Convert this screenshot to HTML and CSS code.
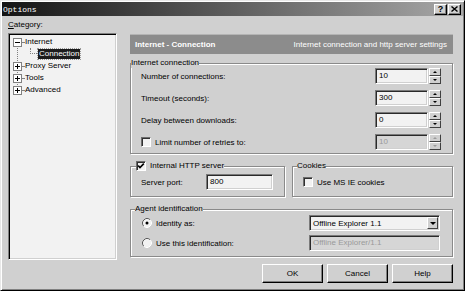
FILE: index.html
```html
<!DOCTYPE html>
<html lang="en">
<head>
    <meta charset="UTF-8">
    <meta name="viewport" content="width=device-width, initial-scale=1.0">
    <title>Options</title>
    <link rel="stylesheet" href="styles.css">
</head>
<body>
    <div class="window">
        <div class="titlebar">
            <span class="title">Options</span>
            <div class="title-buttons">
                <span class="tbtn">?</span>
                <span class="tbtn">
                    <svg width="7" height="6" viewBox="0 0 7 6"><path d="M0.5 0.5l6 5M6.5 0.5l-6 5" stroke="#000" stroke-width="1.4"/></svg>
                </span>
            </div>
        </div>

        <div class="client">
            <div class="main">
                <div class="left">
                    <div class="cat-label"><u>C</u>ategory:</div>
                    <div class="tree">
                        <div class="tree-list">
                            <div class="node">
                                <svg class="twist" width="9" height="9" viewBox="0 0 9 9"><rect x="0.5" y="0.5" width="8" height="8" fill="#fff" stroke="#808080"/><path d="M2 4.5h5" stroke="#000"/></svg>
                                <span class="dash"></span>
                                <span class="node-text">Internet</span>
                            </div>
                            <div class="node">
                                <span class="elbow"></span>
                                <span class="node-text selected">Connection</span>
                            </div>
                            <div class="node">
                                <svg class="twist" width="9" height="9" viewBox="0 0 9 9"><rect x="0.5" y="0.5" width="8" height="8" fill="#fff" stroke="#808080"/><path d="M2 4.5h5M4.5 2v5" stroke="#000"/></svg>
                                <span class="dash"></span>
                                <span class="node-text">Proxy Server</span>
                            </div>
                            <div class="node">
                                <svg class="twist" width="9" height="9" viewBox="0 0 9 9"><rect x="0.5" y="0.5" width="8" height="8" fill="#fff" stroke="#808080"/><path d="M2 4.5h5M4.5 2v5" stroke="#000"/></svg>
                                <span class="dash"></span>
                                <span class="node-text">Tools</span>
                            </div>
                            <div class="node">
                                <svg class="twist" width="9" height="9" viewBox="0 0 9 9"><rect x="0.5" y="0.5" width="8" height="8" fill="#fff" stroke="#808080"/><path d="M2 4.5h5M4.5 2v5" stroke="#000"/></svg>
                                <span class="dash"></span>
                                <span class="node-text">Advanced</span>
                            </div>
                        </div>
                    </div>
                </div>

                <div class="right">
                    <div class="page-header">
                        <span class="page-title">Internet - Connection</span>
                        <span class="page-desc">Internet connection and http server settings</span>
                    </div>

                    <fieldset class="group conn">
                        <legend>Internet connection</legend>
                        <div class="rows">
                            <div class="field-row">
                                <span>Number of connections:</span>
                                <div class="spin">
                                    <span class="edit">10</span>
                                    <span class="spin-btns"><span class="spin-btn up"></span><span class="spin-btn down"></span></span>
                                </div>
                            </div>
                            <div class="field-row">
                                <span>Timeout (seconds):</span>
                                <div class="spin">
                                    <span class="edit">300</span>
                                    <span class="spin-btns"><span class="spin-btn up"></span><span class="spin-btn down"></span></span>
                                </div>
                            </div>
                            <div class="field-row">
                                <span>Delay between downloads:</span>
                                <div class="spin">
                                    <span class="edit">0</span>
                                    <span class="spin-btns"><span class="spin-btn up"></span><span class="spin-btn down"></span></span>
                                </div>
                            </div>
                            <div class="field-row">
                                <span class="check-label"><span class="check"></span>Limit number of retries to:</span>
                                <div class="spin disabled">
                                    <span class="edit">10</span>
                                    <span class="spin-btns"><span class="spin-btn up"></span><span class="spin-btn down"></span></span>
                                </div>
                            </div>
                        </div>
                    </fieldset>

                    <div class="group-row">
                        <fieldset class="group http">
                            <legend class="check-legend">
                                <span class="check"><svg width="8" height="8" viewBox="0 0 8 8"><path d="M1.2 3.6l1.8 1.9 3.8-3.9" stroke="#000" stroke-width="1.6" fill="none"/></svg></span>Internal HTTP server
                            </legend>
                            <div class="field-row">
                                <span>Server port:</span>
                                <span class="edit port">800</span>
                            </div>
                        </fieldset>
                        <fieldset class="group cookies">
                            <legend>Cookies</legend>
                            <div class="field-row">
                                <span class="check-label"><span class="check"></span>Use MS IE cookies</span>
                            </div>
                        </fieldset>
                    </div>

                    <fieldset class="group agent">
                        <legend>Agent identification</legend>
                        <div class="rows tight">
                            <div class="field-row">
                                <span class="radio-label">
                                    <svg width="10" height="10" viewBox="0 0 10 10"><circle cx="5" cy="5" r="4.3" fill="#f2f2f2"/><path d="M1.82 8.18A4.5 4.5 0 0 1 8.18 1.82" stroke="#5a5a5a" fill="none"/><path d="M8.18 1.82A4.5 4.5 0 0 1 1.82 8.18" stroke="#fff" fill="none"/><circle cx="5" cy="5" r="1.5" fill="#000"/></svg>
                                    Identity as:
                                </span>
                                <div class="combo">
                                    <span class="combo-text">Offline Explorer 1.1</span>
                                    <span class="combo-btn"></span>
                                </div>
                            </div>
                            <div class="field-row">
                                <span class="radio-label">
                                    <svg width="10" height="10" viewBox="0 0 10 10"><circle cx="5" cy="5" r="4.3" fill="#f2f2f2"/><path d="M1.82 8.18A4.5 4.5 0 0 1 8.18 1.82" stroke="#5a5a5a" fill="none"/><path d="M8.18 1.82A4.5 4.5 0 0 1 1.82 8.18" stroke="#fff" fill="none"/></svg>
                                    Use this identification:
                                </span>
                                <span class="edit wide disabled">Offline Explorer/1.1</span>
                            </div>
                        </div>
                    </fieldset>
                </div>
            </div>

            <div class="buttons">
                <span class="btn">OK</span>
                <span class="btn">Cancel</span>
                <span class="btn">Help</span>
            </div>
        </div>
    </div>
</body>
</html>
```

FILE: styles.css
```css
* {
    box-sizing: border-box;
}

body {
    margin: 0;
    background: #d0d0d0;
    font-family: "Liberation Sans", Arial, sans-serif;
    font-size: 8px;
    color: #000;
}

.window {
    width: 465px;
    height: 291px;
    background: #d0d0d0;
    border: 1px solid;
    border-color: #e8e8e8 #000 #000 #e8e8e8;
    box-shadow: inset 1px 1px 0 #fff, inset -1px -1px 0 #808080;
    padding: 1px;
}

.titlebar {
    height: 14px;
    display: flex;
    align-items: center;
    justify-content: space-between;
    padding: 0 2px 0 1px;
    background: linear-gradient(to right, #141414, #a8a8a8);
}

.title {
    font-family: "Liberation Mono", monospace;
    font-size: 8px;
    color: #fff;
}

.title-buttons {
    display: flex;
    gap: 1px;
}

.tbtn {
    width: 13px;
    height: 11px;
    display: flex;
    align-items: center;
    justify-content: center;
    background: #d0d0d0;
    border: 1px solid;
    border-color: #fff #000 #000 #fff;
    box-shadow: inset -1px -1px 0 #808080;
    font-weight: bold;
    font-size: 9px;
    line-height: 1;
}

.tbtn svg {
    display: block;
}

.client {
    padding: 4px 10px 0 6px;
}

.main {
    display: flex;
    justify-content: space-between;
}

/* left: category tree */
.left {
    width: 109px;
}

.cat-label {
    height: 10px;
    line-height: 10px;
    margin-bottom: 3px;
}

.tree {
    height: 227px;
    background: #f2f2f2;
    border: 1px solid;
    border-color: #808080 #fff #fff #808080;
    box-shadow: inset 1px 1px 0 #000, inset -1px -1px 0 #d0d0d0;
    padding: 1px;
    overflow: hidden;
}

.tree-list {
    padding-top: 1px;
    background-image: repeating-linear-gradient(to bottom, #808080 0 1px, transparent 1px 2px);
    background-size: 1px 40px;
    background-position: 7px 11px;
    background-repeat: no-repeat;
}

.node {
    display: flex;
    align-items: center;
    height: 12px;
    white-space: nowrap;
}

.twist {
    display: block;
    margin-left: 3px;
}

.dash {
    width: 2px;
    border-top: 1px dotted #808080;
}

.node-text {
    padding: 0 1px;
    line-height: 10px;
}

.elbow {
    align-self: flex-start;
    width: 7px;
    height: 6px;
    margin-left: 20px;
    margin-right: 1px;
    border-left: 1px dotted #808080;
    border-bottom: 1px dotted #808080;
}

.selected {
    background: #1c1c1c;
    color: #fff;
    outline: 1px dotted #9a9a9a;
}

/* right: settings page */
.right {
    width: 323px;
    padding-top: 14px;
}

.page-header {
    height: 20px;
    display: flex;
    align-items: center;
    justify-content: space-between;
    padding: 0 6px 0 5px;
    background: #8c8c8c;
    border-top: 1px solid #b4b4b4;
    color: #fff;
}

.page-title {
    font-weight: bold;
}

.group {
    margin: 0;
    min-width: 0;
    padding: 0 11px 3px 10px;
    border: 1px solid #8a8a8a;
    box-shadow: inset 1px 1px 0 #fff, 1px 1px 0 #fff;
}

.group legend {
    padding: 0;
    margin-left: -10px;
    line-height: 10px;
    background: #d0d0d0;
}

.conn {
    margin-top: 4px;
}

.rows {
    display: flex;
    flex-direction: column;
    gap: 6px;
}

.rows.tight {
    gap: 4px;
}

.field-row {
    height: 16px;
    display: flex;
    align-items: center;
    justify-content: space-between;
    white-space: nowrap;
}

.spin {
    display: flex;
}

.edit {
    width: 53px;
    height: 16px;
    padding: 0 3px;
    line-height: 14px;
    background: #f2f2f2;
    border: 1px solid;
    border-color: #7a7a7a #fff #fff #7a7a7a;
    box-shadow: inset 1px 1px 0 #2a2a2a, inset -1px -1px 0 #d0d0d0;
    overflow: hidden;
}

.edit.port {
    width: 67px;
}

.edit.wide {
    width: 131px;
}

.edit.disabled,
.spin.disabled .edit {
    background: #d6d6d6;
    color: #9a9a9a;
}

.spin-btns {
    width: 12px;
    margin-left: 1px;
    display: flex;
    flex-direction: column;
}

.spin-btn {
    height: 8px;
    display: flex;
    align-items: center;
    justify-content: center;
    background: #d0d0d0;
    border: 1px solid;
    border-color: #fff #404040 #404040 #fff;
}

.spin-btn.up::after {
    content: "";
    border-left: 2px solid transparent;
    border-right: 2px solid transparent;
    border-bottom: 2px solid #000;
}

.spin-btn.down::after {
    content: "";
    border-left: 2px solid transparent;
    border-right: 2px solid transparent;
    border-top: 2px solid #000;
}

.spin.disabled .spin-btn.up::after {
    border-bottom-color: #9a9a9a;
}

.spin.disabled .spin-btn.down::after {
    border-top-color: #9a9a9a;
}

.check-label {
    display: flex;
    align-items: center;
    gap: 4px;
}

.check {
    width: 10px;
    height: 10px;
    display: flex;
    align-items: center;
    justify-content: center;
    background: #f2f2f2;
    border: 1px solid;
    border-color: #6c6c6c #fff #fff #6c6c6c;
    box-shadow: inset 1px 1px 0 #303030;
}

.check svg {
    display: block;
}

.group legend.check-legend {
    display: flex;
    align-items: center;
    gap: 4px;
    margin-left: -5px;
}

.group-row {
    display: flex;
    justify-content: space-between;
    margin-top: 7px;
}

.http {
    width: 155px;
    padding-bottom: 6px;
}

.http .field-row {
    margin-top: 3px;
}

.cookies {
    width: 161px;
    padding-bottom: 6px;
}

.cookies legend {
    margin-left: -6px;
}

.cookies .field-row {
    margin-top: 3px;
    justify-content: flex-start;
}

.agent {
    margin-top: 7px;
    padding: 1px 12px 5px 10px;
}

.agent legend {
    margin-left: -6px;
}

.radio-label {
    display: flex;
    align-items: center;
    gap: 4px;
    margin-left: 1px;
}

.radio-label svg {
    display: block;
}

.combo {
    width: 131px;
    height: 16px;
    display: flex;
    align-items: center;
    justify-content: space-between;
    padding: 1px;
    background: #f2f2f2;
    border: 1px solid;
    border-color: #7a7a7a #fff #fff #7a7a7a;
    box-shadow: inset 1px 1px 0 #2a2a2a, inset -1px -1px 0 #d0d0d0;
}

.combo-text {
    padding-left: 2px;
}

.combo-btn {
    width: 11px;
    height: 12px;
    display: flex;
    align-items: center;
    justify-content: center;
    background: #d0d0d0;
    border: 1px solid;
    border-color: #fff #404040 #404040 #fff;
}

.combo-btn::after {
    content: "";
    border-left: 3px solid transparent;
    border-right: 3px solid transparent;
    border-top: 3px solid #000;
}

.buttons {
    display: flex;
    justify-content: flex-end;
    gap: 4px;
    margin-top: 4px;
}

.btn {
    width: 61px;
    height: 19px;
    display: flex;
    align-items: center;
    justify-content: center;
    background: #d0d0d0;
    border: 1px solid;
    border-color: #fff #000 #000 #fff;
    box-shadow: inset -1px -1px 0 #808080;
}
```
